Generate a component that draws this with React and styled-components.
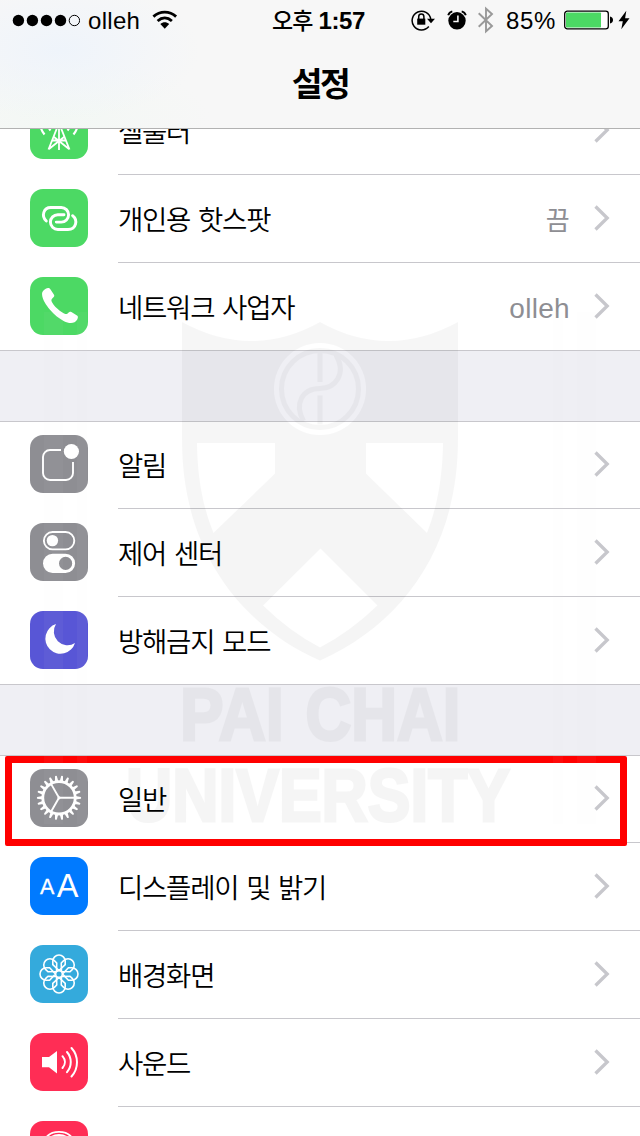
import React from "react";
import styled, { createGlobalStyle } from "styled-components";

const GlobalStyle = createGlobalStyle`
  * { box-sizing: border-box; }
  html, body { margin: 0; padding: 0; }
  body { background: #fff; }
  svg { display: block; flex: none; }
`;

const Screen = styled.div`
  position: relative;
  width: 640px;
  height: 1136px;
  overflow: hidden;
  display: flex;
  flex-direction: column;
  background: #efeff4;
  color: #000;
  font-family: "Liberation Sans", "Noto Sans CJK KR", sans-serif;
`;

const Header = styled.header`
  flex: none;
  height: 129px;
  border-bottom: 1px solid #b2b2b2;
  background:
    radial-gradient(ellipse 140px 70px at 60px 50px, rgba(236, 243, 252, 0.75), rgba(236, 243, 252, 0)),
    radial-gradient(ellipse 150px 60px at 60px 118px, rgba(241, 248, 243, 0.7), rgba(241, 248, 243, 0)),
    #f7f7f7;
`;

const StatusBar = styled.div`
  height: 40px;
  display: grid;
  grid-template-columns: 1fr auto 1fr;
  align-items: center;
  padding: 0 10px 0 12px;
`;

const StatusLeft = styled.div`
  display: flex;
  align-items: center;
`;

const StatusRight = styled.div`
  display: flex;
  align-items: center;
  justify-content: flex-end;
`;

const Carrier = styled.span`
  width: 52px;
  margin: 2px 12px 0 8px;
  font-size: 24px;
  line-height: 28px;
  letter-spacing: 0.3px;
  white-space: nowrap;
`;

const Clock = styled.div`
  display: flex;
  align-items: baseline;
  gap: 6px;
  margin: 0 0 0 -5px;
  font-size: 24px;
  line-height: 28px;
  font-weight: 700;
  letter-spacing: -0.4px;
`;

const Meridiem = styled.span`
  font-family: "Noto Sans CJK KR", sans-serif;
  font-size: 23px;
  font-weight: 500;
  letter-spacing: -1px;
`;

const Percent = styled.span`
  width: 50px;
  margin: 2px 8px 0 12px;
  font-size: 24px;
  line-height: 28px;
  letter-spacing: 0.6px;
  white-space: nowrap;
`;

const Glyph = styled.span`
  margin-right: ${(p) => p.$gap}px;
`;

const Title = styled.h1`
  margin: 0;
  height: 88px;
  text-align: center;
  font-family: "Noto Sans CJK KR", sans-serif;
  font-size: 33.5px;
  font-weight: 700;
  line-height: 84px;
  letter-spacing: -2.5px;
`;

const List = styled.main`
  flex: 1;
  min-height: 0;
  overflow: hidden;
`;

const Group = styled.section`
  margin-top: ${(p) => p.$top}px;
  background: #fff;
  box-shadow: inset 0 1px #c8c7cc, inset 0 -1px #c8c7cc;
`;

const Row = styled.div`
  height: 88px;
  display: flex;
  padding-left: 30px;
`;

const Tile = styled.div`
  flex: none;
  width: 58px;
  height: 58px;
  margin: 14px 30px 0 0;
  border-radius: 13px;
  background: ${(p) => p.$color};
  overflow: hidden;
`;

const RowBody = styled.div`
  flex: 1;
  display: flex;
  align-items: center;
  padding: 0 30px 2px 0;
  border-bottom: 1px solid #c8c7cc;
`;

const Label = styled.span`
  flex: 1;
  font-family: "Noto Sans CJK KR", sans-serif;
  font-size: 27.5px;
  font-weight: 350;
  line-height: 40px;
  letter-spacing: -1.25px;
  word-spacing: 3px;
  white-space: nowrap;
`;

const Value = styled.span`
  margin: 6px 24px 0 0;
  color: #8e8e93;
  font-family: "Liberation Sans", "Noto Sans CJK KR", sans-serif;
  font-size: ${(p) => (p.$hangul ? 26 : 28)}px;
  line-height: 40px;
  letter-spacing: 0.3px;
`;

const Highlight = styled.div`
  position: absolute;
  left: 5px;
  top: 756px;
  width: 622px;
  height: 90px;
  border: 7px solid #f00;
  border-radius: 2px;
`;

const WatermarkLayer = styled.svg`
  position: absolute;
  left: 0;
  top: 0;
  pointer-events: none;
`;

const line = { fill: "none", stroke: "#fff", strokeLinecap: "round", strokeLinejoin: "round" };

function Drawing({ children }) {
  return (
    <svg width="58" height="58" viewBox="0 0 58 58">
      {children}
    </svg>
  );
}

const CellularIcon = () => (
  <Drawing>
    <g {...line} strokeWidth="1.8" strokeLinecap="butt">
      <path d="M29 22V49M29 22L18.5 48.5M29 22L39.500 48.500M24 36L39 48M34 36L19 48M22 39.500H36" />
      <path strokeWidth="2.2" d="M14.500 33.500C9 27 9 18 14.500 11M43.500 33.500C49 27 49 18 43.500 11M20.500 29.500C17 25 17 20 20.500 15M37.500 29.500C41 25 41 20 37.500 15" />
    </g>
  </Drawing>
);

const HotspotIcon = () => (
  <Drawing>
    <g {...line} strokeWidth="2.9">
      <path d="M16.300 32C11 27 13.500 18.500 20.800 18.500H31.300a7.300 7.300 0 0 1 0 14.600H26.300" />
      <path d="M34 25.700H27.800a7.400 7.400 0 0 0 0 14.800H38C46.500 40.500 48 31 42.600 26.700" />
    </g>
  </Drawing>
);

const PhoneIcon = () => (
  <Drawing>
    <path
      fill="#fff"
      d="M13.500 13.500C15 12.200 16.500 11.300 18 11C19 10.800 19.700 11.200 20.200 12L24 17.800C24.500 18.700 24.300 19.400 23.700 20.100C22.800 21.200 21.500 21.900 21.400 23.200C21.300 25 24.500 29.200 27.500 31.800C30.300 34.300 34 37.100 36 37.100C37.500 37.100 38.300 35.500 39.500 34.900C40.200 34.600 40.700 34.700 41.400 35.100L47 38.600C47.900 39.200 48.100 40 47.800 41C47.200 43 46 44.500 44.500 45.300C41.500 46.700 37.500 46 34 44.200C29.500 42 24 37.500 20 32.800C16 28 12.500 22.500 12.100 18C11.900 16 12.200 14.700 13.500 13.500Z"
    />
  </Drawing>
);

const NotificationIcon = () => (
  <Drawing>
    <path {...line} strokeLinecap="butt" strokeWidth="1.9" d="M31 15H20a7 7 0 0 0-7 7V38a7 7 0 0 0 7 7H36a7 7 0 0 0 7-7V27" />
    <circle cx="41.400" cy="16.500" r="7.600" fill="#fff" />
  </Drawing>
);

const ControlIcon = () => (
  <Drawing>
    <rect x="13.900" y="9" width="30.400" height="17.400" rx="8.700" {...line} strokeWidth="1.9" />
    <circle cx="22.400" cy="17.600" r="5.700" fill="#fff" />
    <path
      fill="#fff"
      fillRule="evenodd"
      d="M22.600 30.800H35.500a9.600 9.600 0 0 1 0 19.200H22.600a9.600 9.600 0 0 1 0-19.200ZM35.600 33.800a6.600 6.600 0 1 0 0 13.200a6.600 6.600 0 0 0 0-13.200Z"
    />
  </Drawing>
);

const MoonIcon = () => (
  <Drawing>
    <path fill="#fff" d="M26 13.100A15.150 15.150 0 1 0 45 32A13.700 13.700 0 0 1 26 13.100Z" />
  </Drawing>
);

const TEETH = Array.from({ length: 22 }, (_, i) => (i * 360) / 22);

const GearIcon = () => (
  <Drawing>
    <circle cx="29" cy="28.800" r="16.200" fill="none" stroke="#fff" strokeWidth="2.800" />
    {TEETH.map((a) => (
      <path key={a} fill="#fff" transform={`rotate(${a} 29 28.800)`} d="M45.500 27.100L50.800 27.900Q51.600 28.800 50.800 29.700L45.500 30.500Z" />
    ))}
    <path {...line} strokeWidth="1.900" d="M44.500 28.800H29L21.300 15.400M29 28.800L21.300 42.200" />
    <circle cx="29" cy="28.800" r="1.600" fill="#fff" />
  </Drawing>
);

const DisplayIcon = () => (
  <Drawing>
    <g fill="#fff" fontFamily="Liberation Sans, sans-serif">
      <text x="9.900" y="37.200" fontSize="21.500" stroke="#fff" strokeWidth="0.300">A</text>
      <text x="26.800" y="40" fontSize="32.500">A</text>
    </g>
  </Drawing>
);

const PETALS = [0, 45, 90, 135, 180, 225, 270, 315];

const WallpaperIcon = () => (
  <Drawing>
    <g {...line} strokeWidth="1.600">
      {PETALS.map((a) => (
        <path key={a} transform={`rotate(${a} 29 29)`} d="M29 25.500L22.800 19.600V16.200A6.200 6.200 0 0 1 35.200 16.200V19.600Z" />
      ))}
      <circle cx="29" cy="29" r="3.400" />
    </g>
  </Drawing>
);

const SoundIcon = () => (
  <Drawing>
    <path fill="#fff" d="M12 23.900H19L27 18V40.500L19 34.300H12Z" />
    <g {...line} strokeWidth="2">
      <path d="M32.500 23.200C35.700 26.800 35.700 31.400 32.500 35" />
      <path d="M37 19C42 24.800 42 33.400 37 39.200" />
      <path d="M41.500 15C48.800 23 48.800 35.500 41.500 43.500" />
    </g>
  </Drawing>
);

const TouchIcon = () => (
  <Drawing>
    <g {...line} strokeWidth="1.900">
      <path d="M17.500 15C23 9.500 35 9.500 40.500 15" />
      <path d="M14 29a15 15 0 0 1 30 0" />
    </g>
  </Drawing>
);

const Signal = () => (
  <svg width="68" height="14" viewBox="0 0 68 14">
    {[6.400, 20.400, 34.500, 48.500].map((x) => (
      <circle key={x} cx={x} cy="7.500" r="5.700" />
    ))}
    <circle cx="62.400" cy="7.500" r="5.200" fill="none" stroke="#000" />
  </svg>
);

const Wifi = () => (
  <svg width="26" height="20" viewBox="0 0 26 20">
    <g fill="none" stroke="#000" strokeWidth="2.800">
      <path d="M1.400 6.600C8 .5 17.500.5 24.100 6.600" />
      <path d="M5.600 11C10 7 15.500 7 19.900 11" />
    </g>
    <path d="M8.300 14.100C11.200 11.700 14.300 11.700 17.200 14.100L12.750 18.700Z" />
  </svg>
);

const RotationLock = () => (
  <svg width="24" height="22" viewBox="0 0 24 22">
    <path fill="none" stroke="#000" strokeWidth="1.500" d="M17.800 17.600A9.400 9.400 0 1 1 19.800 10" />
    <path d="M16 9.800H24L20 14.300Z" />
    <path d="M6.200 9.600H14.300V15.700H6.200Z" />
    <path fill="none" stroke="#000" strokeWidth="1.500" d="M7.700 10V7.700a2.600 2.600 0 0 1 5.200 0V10" />
  </svg>
);

const Alarm = () => (
  <svg width="20" height="20" viewBox="0 0 20 20">
    <circle cx="10" cy="10.800" r="8.700" />
    <path fill="none" stroke="#f7f7f7" strokeWidth="1.600" d="M10.900 5.500V11.500H6.300" />
    <path fill="none" stroke="#000" strokeWidth="1.900" d="M1.200 5.300C1.800 3.300 3.300 1.900 5.300 1.400M18.800 5.300C18.200 3.300 16.700 1.900 14.700 1.400" />
  </svg>
);

const Bluetooth = () => (
  <svg width="16" height="28" viewBox="0 0 16 28">
    <path fill="none" stroke="#999" strokeWidth="1.900" d="M.7 7.300L14 20L8 25.300V2.700L14 8L.7 20.700" />
  </svg>
);

const Battery = () => (
  <svg width="49" height="20" viewBox="0 0 49 20">
    <rect x=".7" y="1.200" width="43.600" height="17.600" rx="2.600" fill="#fff" stroke="#000" strokeWidth="1.300" />
    <rect x="2" y="2.500" width="35" height="15" rx=".8" fill="#4cd964" />
    <path d="M46 6.500Q49 7.200 49 10T46 13.500Z" />
  </svg>
);

const Bolt = () => (
  <svg width="12" height="20" viewBox="0 0 12 20">
    <path d="M8.300.8L.5 11.300H4.800L3.300 19.300L11.500 8.300H7.100Z" />
  </svg>
);

const Chevron = () => (
  <svg width="16" height="26" viewBox="0 0 16 26">
    <path fill="none" stroke="#c7c7cc" strokeWidth="3.300" d="M1.500 1.500L13.200 13L1.500 24.500" />
  </svg>
);

const Watermark = () => (
  <WatermarkLayer width="640" height="1136" viewBox="0 0 640 1136">
    <g fill="#e0e0e0" fillOpacity=".045">
      <rect x="44" y="312" width="19" height="512" />
      <rect x="77" y="312" width="10" height="512" />
      <rect x="553" y="312" width="10" height="512" />
      <rect x="577" y="312" width="19" height="512" />
    </g>
    <g fill="#000" opacity=".037">
      <path
        fillRule="evenodd"
        d="M182 322Q252 360 320 322Q388 360 458 322V440C458 550 400 625 320 660.500C240 625 182 550 182 440Z
           M320 343a46 46 0 1 0 0 92a46 46 0 0 0 0-92Z
           M197 443H275V473.500L213.500 533C202 505 197.500 475 197 443Z
           M443 443H366V473.500L427 533C438 505 442.500 475 443 443Z
           M320.500 548.500L377.500 605.500Q350 632 320 647.500Q290 632 263 605.500Z"
      />
      <g fontFamily="Liberation Sans Narrow, Liberation Sans, sans-serif" fontWeight="700" fontSize="74" stroke="#000" strokeWidth="3">
        <text x="180" y="740" textLength="104" lengthAdjust="spacingAndGlyphs">PAI</text>
        <text x="305.500" y="740" textLength="155" lengthAdjust="spacingAndGlyphs">CHAI</text>
        <text x="126" y="821" textLength="384" lengthAdjust="spacingAndGlyphs">UNIVERSITY</text>
      </g>
    </g>
    <g fill="none" stroke="#000" opacity=".033" strokeWidth="5">
      <circle cx="320" cy="389" r="38.500" />
      <path d="M320 353V382M320 395.500V424.500" />
      <path d="M336 355C347 374 335 388.500 320 388.500C302 388.500 294 404 303.500 421" />
    </g>
  </WatermarkLayer>
);

const GROUPS = [
  {
    top: -42,
    rows: [
      { label: "셀룰러", color: "#4cd964", Icon: CellularIcon },
      { label: "개인용 핫스팟", value: "끔", hangul: true, color: "#4cd964", Icon: HotspotIcon },
      { label: "네트워크 사업자", value: "olleh", color: "#4cd964", Icon: PhoneIcon },
    ],
  },
  {
    top: 70,
    rows: [
      { label: "알림", color: "#8e8e93", Icon: NotificationIcon },
      { label: "제어 센터", color: "#8e8e93", Icon: ControlIcon },
      { label: "방해금지 모드", color: "#5856d6", Icon: MoonIcon },
    ],
  },
  {
    top: 70,
    rows: [
      { label: "일반", color: "#8e8e93", Icon: GearIcon },
      { label: "디스플레이 및 밝기", color: "#007aff", Icon: DisplayIcon },
      { label: "배경화면", color: "#34aadc", Icon: WallpaperIcon },
      { label: "사운드", color: "#ff2d55", Icon: SoundIcon },
      { label: "", color: "#ff2d55", Icon: TouchIcon },
    ],
  },
];

function SettingRow({ label, value, hangul, color, Icon }) {
  return (
    <Row>
      <Tile $color={color}>
        <Icon />
      </Tile>
      <RowBody>
        <Label>{label}</Label>
        {value && <Value $hangul={hangul}>{value}</Value>}
        <Chevron />
      </RowBody>
    </Row>
  );
}

export default function App() {
  return (
    <>
      <GlobalStyle />
      <Screen>
        <Header>
          <StatusBar>
            <StatusLeft>
              <Signal />
              <Carrier>olleh</Carrier>
              <Wifi />
            </StatusLeft>
            <Clock>
              <Meridiem>오후</Meridiem>
              <span>1:57</span>
            </Clock>
            <StatusRight>
              <Glyph $gap={12}><RotationLock /></Glyph>
              <Glyph $gap={11}><Alarm /></Glyph>
              <Bluetooth />
              <Percent>85%</Percent>
              <Glyph $gap={5}><Battery /></Glyph>
              <Bolt />
            </StatusRight>
          </StatusBar>
          <Title>설정</Title>
        </Header>
        <List>
          {GROUPS.map((group, i) => (
            <Group key={i} $top={group.top}>
              {group.rows.map((row, j) => (
                <SettingRow key={j} {...row} />
              ))}
            </Group>
          ))}
        </List>
        <Highlight />
        <Watermark />
      </Screen>
    </>
  );
}
